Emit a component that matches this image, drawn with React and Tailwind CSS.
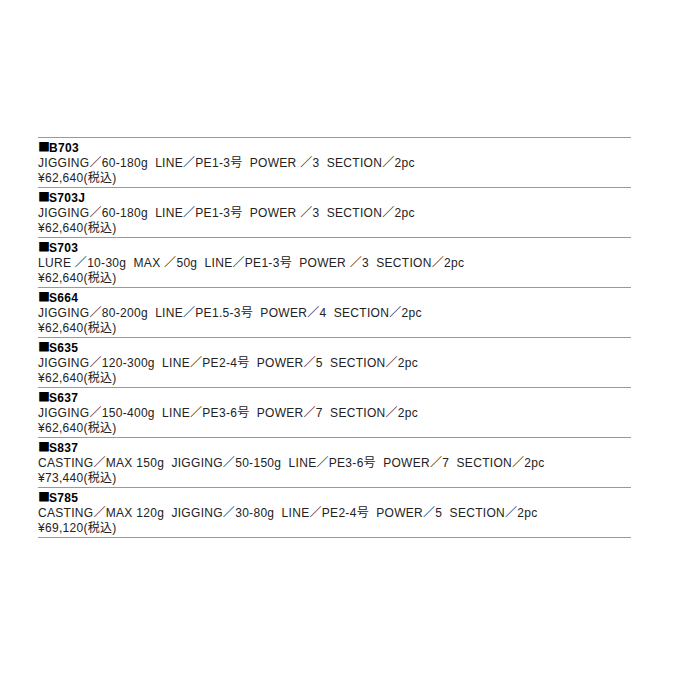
const items = [
  { code: "B703", spec: "JIGGING／60-180g  LINE／PE1-3号  POWER ／3  SECTION／2pc", price: "¥62,640(税込)" },
  { code: "S703J", spec: "JIGGING／60-180g  LINE／PE1-3号  POWER ／3  SECTION／2pc", price: "¥62,640(税込)" },
  { code: "S703", spec: "LURE ／10-30g  MAX ／50g  LINE／PE1-3号  POWER ／3  SECTION／2pc", price: "¥62,640(税込)" },
  { code: "S664", spec: "JIGGING／80-200g  LINE／PE1.5-3号  POWER／4  SECTION／2pc", price: "¥62,640(税込)" },
  { code: "S635", spec: "JIGGING／120-300g  LINE／PE2-4号  POWER／5  SECTION／2pc", price: "¥62,640(税込)" },
  { code: "S637", spec: "JIGGING／150-400g  LINE／PE3-6号  POWER／7  SECTION／2pc", price: "¥62,640(税込)" },
  { code: "S837", spec: "CASTING／MAX 150g  JIGGING／50-150g  LINE／PE3-6号  POWER／7  SECTION／2pc", price: "¥73,440(税込)" },
  { code: "S785", spec: "CASTING／MAX 120g  JIGGING／30-80g  LINE／PE2-4号  POWER／5  SECTION／2pc", price: "¥69,120(税込)" },
];

export default function App() {
  return (
    <div className="w-[680px] h-[680px] bg-white pt-[137px] pl-[38px]">
      <div
        className="w-[593px] border-t border-[#999] text-[12px] leading-[15px] tracking-[0.3px] text-[#222]"
        style={{ fontFamily: '"Liberation Sans", "Noto Sans CJK JP", sans-serif' }}
      >
        {items.map((item) => (
          <div key={item.code} className="h-[50px] border-b border-[#999] pt-[1px] whitespace-pre">
            <p className="font-bold text-black">
              <span className="tracking-[-1px]" style={{ fontFamily: '"Noto Sans CJK JP", sans-serif' }}>■</span>
              {item.code}
            </p>
            <p>{item.spec}</p>
            <p>{item.price}</p>
          </div>
        ))}
      </div>
    </div>
  );
}
